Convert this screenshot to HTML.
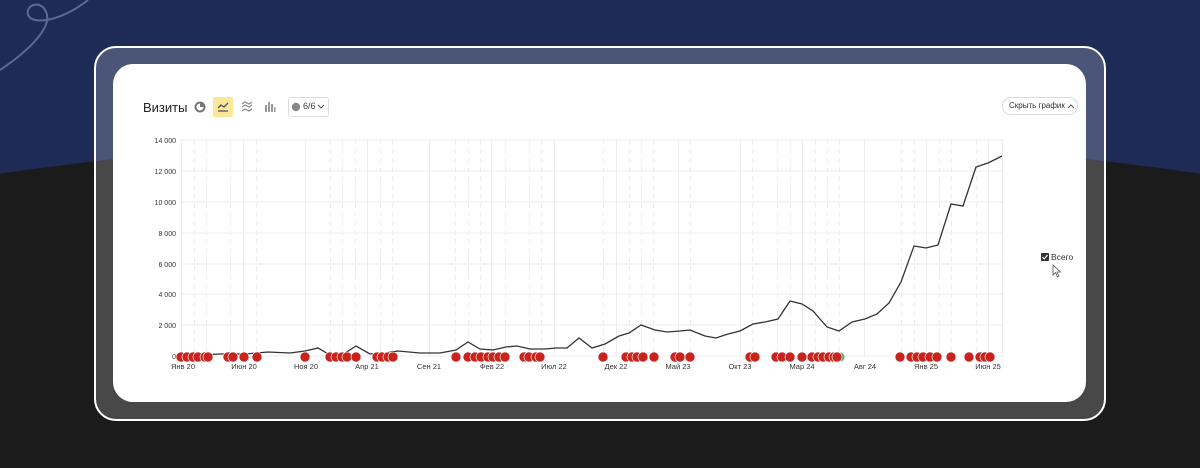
<!DOCTYPE html>
<html><head><meta charset="utf-8"><style>
*{margin:0;padding:0;box-sizing:border-box}
html,body{width:1200px;height:468px;overflow:hidden}
body{background:#1f2b57;font-family:"Liberation Sans","DejaVu Sans",sans-serif;position:relative}
.wrap{position:absolute;left:0;top:0;width:1200px;height:468px;overflow:hidden}
.dark{position:absolute;left:-900px;top:132px;width:3000px;height:1000px;border-radius:50%;background:#1b1b1b}
.frame{position:absolute;left:94px;top:46px;width:1012px;height:375px;border:2px solid #fff;border-radius:22px;background:rgba(255,255,255,0.2)}
.card{position:absolute;left:113px;top:64px;width:973px;height:338px;background:#fff;border-radius:20px}
.t{position:absolute;font-size:12.5px;color:#222;white-space:nowrap}
.btn{position:absolute;border:1px solid #ddd;border-radius:3px;background:#fff}
</style></head><body>
<div class="wrap">
<div class="dark"></div>
<svg style="position:absolute;left:0;top:0" width="120" height="80"><path d="M0,70 C30,50 55,25 45,10 C40,0 25,5 28,15 C32,25 60,22 88,0" fill="none" stroke="#5a6a90" stroke-width="2"/></svg>
<div class="frame"></div>
<div class="card"></div>
<div class="t" style="left:143px;top:100px;font-size:13px">Визиты</div>
<svg style="position:absolute;left:194px;top:101px" width="12" height="12"><circle cx="6" cy="6" r="4.5" fill="none" stroke="#777" stroke-width="2"/><path d="M6 6V1.5A4.5 4.5 0 0 1 10.5 6Z" fill="#777"/></svg>
<div style="position:absolute;left:213px;top:97px;width:20px;height:20px;background:#fbe79a;border-radius:2px"></div>
<svg style="position:absolute;left:217px;top:101px" width="12" height="12"><path d="M1 7L4 4L7 6L11 2" fill="none" stroke="#555" stroke-width="1.3"/><path d="M1 10H11" stroke="#555" stroke-width="1.3"/></svg>
<svg style="position:absolute;left:241px;top:101px" width="12" height="12"><path d="M1 3L4 1L8 3L11 1M1 6L4 4L8 6L11 4M1 10L4 8L8 10L11 8" fill="none" stroke="#888" stroke-width="1.2"/></svg>
<svg style="position:absolute;left:264px;top:101px" width="12" height="12"><rect x="1" y="4" width="2" height="7" fill="#999"/><rect x="4" y="1" width="2" height="10" fill="#999"/><rect x="7" y="3" width="2" height="8" fill="#999"/><rect x="10" y="6" width="1.5" height="5" fill="#999"/></svg>
<div class="btn" style="left:288px;top:97px;width:41px;height:20px"></div>
<svg style="position:absolute;left:291px;top:102px" width="10" height="10"><circle cx="5" cy="5" r="4.2" fill="#888"/></svg>
<div class="t" style="left:303px;top:101px;font-size:9px;color:#444">6/6</div>
<svg style="position:absolute;left:317px;top:104px" width="8" height="6"><path d="M1 1L4 4L7 1" fill="none" stroke="#555" stroke-width="1.1"/></svg>
<div class="btn" style="left:1002px;top:97px;width:76px;height:18px;border-radius:9px"></div>
<div class="t" style="left:1009px;top:101px;font-size:8px;color:#333">Скрыть график</div>
<svg style="position:absolute;left:1067px;top:103px" width="8" height="6"><path d="M1 5L4 2L7 5" fill="none" stroke="#555" stroke-width="1"/></svg>
<div style="position:absolute;left:1041px;top:253px;width:8px;height:8px;background:#333;border-radius:1px"></div>
<svg style="position:absolute;left:1041px;top:253px" width="8" height="8"><path d="M1.5 4L3.3 6L6.5 2" fill="none" stroke="#fff" stroke-width="1.2"/></svg>
<div class="t" style="left:1051px;top:252px;font-size:8.5px;color:#333">Всего</div>
<svg style="position:absolute;left:1052px;top:264px" width="10" height="14"><path d="M1 1V11L3.5 8.5L5.5 13L7 12.3L5 8H8.5Z" fill="#fff" stroke="#555" stroke-width="0.8"/></svg>
<svg style="position:absolute;left:0;top:0" width="1200" height="468">
<g stroke="#ececec" stroke-width="1">
<line x1="181" y1="140" x2="1002" y2="140"/><line x1="181" y1="171" x2="1002" y2="171"/><line x1="181" y1="202" x2="1002" y2="202"/><line x1="181" y1="233" x2="1002" y2="233"/><line x1="181" y1="264" x2="1002" y2="264"/><line x1="181" y1="294" x2="1002" y2="294"/><line x1="181" y1="325" x2="1002" y2="325"/><line x1="181" y1="356" x2="1002" y2="356"/>
<line x1="181.5" y1="140" x2="181.5" y2="356"/><line x1="243.5" y1="140" x2="243.5" y2="356"/><line x1="305.5" y1="140" x2="305.5" y2="356"/><line x1="367.5" y1="140" x2="367.5" y2="356"/><line x1="429.5" y1="140" x2="429.5" y2="356"/><line x1="491.5" y1="140" x2="491.5" y2="356"/><line x1="554.5" y1="140" x2="554.5" y2="356"/><line x1="616.5" y1="140" x2="616.5" y2="356"/><line x1="678.5" y1="140" x2="678.5" y2="356"/><line x1="740.5" y1="140" x2="740.5" y2="356"/><line x1="802.5" y1="140" x2="802.5" y2="356"/><line x1="864.5" y1="140" x2="864.5" y2="356"/><line x1="926.5" y1="140" x2="926.5" y2="356"/><line x1="988.5" y1="140" x2="988.5" y2="356"/><line x1="1002.5" y1="140" x2="1002.5" y2="356"/>
</g>
<g stroke="#ececec" stroke-dasharray="5,4">
<line x1="194.5" y1="140" x2="194.5" y2="356"/><line x1="206.5" y1="140" x2="206.5" y2="356"/><line x1="230.5" y1="140" x2="230.5" y2="356"/><line x1="256.5" y1="140" x2="256.5" y2="356"/><line x1="330.5" y1="140" x2="330.5" y2="356"/><line x1="342.5" y1="140" x2="342.5" y2="356"/><line x1="355.5" y1="140" x2="355.5" y2="356"/><line x1="380.5" y1="140" x2="380.5" y2="356"/><line x1="392.5" y1="140" x2="392.5" y2="356"/><line x1="455.5" y1="140" x2="455.5" y2="356"/><line x1="468.5" y1="140" x2="468.5" y2="356"/><line x1="480.5" y1="140" x2="480.5" y2="356"/><line x1="505.5" y1="140" x2="505.5" y2="356"/><line x1="529.5" y1="140" x2="529.5" y2="356"/><line x1="541.5" y1="140" x2="541.5" y2="356"/><line x1="603.5" y1="140" x2="603.5" y2="356"/><line x1="629.5" y1="140" x2="629.5" y2="356"/><line x1="641.5" y1="140" x2="641.5" y2="356"/><line x1="653.5" y1="140" x2="653.5" y2="356"/><line x1="690.5" y1="140" x2="690.5" y2="356"/><line x1="752.5" y1="140" x2="752.5" y2="356"/><line x1="777.5" y1="140" x2="777.5" y2="356"/><line x1="790.5" y1="140" x2="790.5" y2="356"/><line x1="815.5" y1="140" x2="815.5" y2="356"/><line x1="827.5" y1="140" x2="827.5" y2="356"/><line x1="839.5" y1="140" x2="839.5" y2="356"/><line x1="901.5" y1="140" x2="901.5" y2="356"/><line x1="914.5" y1="140" x2="914.5" y2="356"/><line x1="939.5" y1="140" x2="939.5" y2="356"/><line x1="951.5" y1="140" x2="951.5" y2="356"/><line x1="976.5" y1="140" x2="976.5" y2="356"/>
</g>
<g font-size="7" fill="#333" text-anchor="end">
<text x="176" y="143">14 000</text><text x="176" y="174">12 000</text><text x="176" y="205">10 000</text><text x="176" y="236">8 000</text><text x="176" y="267">6 000</text><text x="176" y="297">4 000</text><text x="176" y="328">2 000</text><text x="176" y="359">0</text>
</g>
<g font-size="7.5" fill="#333" text-anchor="middle">
<text x="183" y="369">Янв 20</text><text x="244" y="369">Июн 20</text><text x="306" y="369">Ноя 20</text><text x="367" y="369">Апр 21</text><text x="429" y="369">Сен 21</text><text x="492" y="369">Фев 22</text><text x="554" y="369">Июл 22</text><text x="616" y="369">Дек 22</text><text x="678" y="369">Май 23</text><text x="740" y="369">Окт 23</text><text x="802" y="369">Мар 24</text><text x="865" y="369">Авг 24</text><text x="926" y="369">Янв 25</text><text x="988" y="369">Июн 25</text>
</g>
<polyline fill="none" stroke="#333" stroke-width="1.3" points="181,355 200,355 220,354 245,354 268,352 290,353 305,351 318,348 330,355 342,355 356,346 370,354 385,353 398,351 420,353 440,353 456,350 468,342 480,349 493,350 506,347 517,346 530,349 545,349 556,348 567,348 579,338 592,348 605,344 619,336 629,333 641,325 655,330 667,332 680,331 690,330 705,336 716,338 728,334 740,331 753,324 765,322 778,319 790,301 802,304 813,311 827,327 839,331 852,322 865,319 877,314 889,303 901,282 914,246 926,248 938,245 951,204 963,206 976,167 988,163 1002,156"/>
<g fill="#c8241d" stroke="#fff" stroke-width="0.6">
<circle cx="181" cy="357" r="5"/><circle cx="187" cy="357" r="5"/><circle cx="193" cy="357" r="5"/><circle cx="198" cy="357" r="5"/><circle cx="205" cy="357" r="5"/><circle cx="208" cy="357" r="5"/><circle cx="228" cy="357" r="5"/><circle cx="233" cy="357" r="5"/><circle cx="244" cy="357" r="5"/><circle cx="257" cy="357" r="5"/><circle cx="305" cy="357" r="5"/><circle cx="330" cy="357" r="5"/><circle cx="336" cy="357" r="5"/><circle cx="342" cy="357" r="5"/><circle cx="347" cy="357" r="5"/><circle cx="356" cy="357" r="5"/><circle cx="377" cy="357" r="5"/><circle cx="382" cy="357" r="5"/><circle cx="388" cy="357" r="5"/><circle cx="393" cy="357" r="5"/><circle cx="456" cy="357" r="5"/><circle cx="468" cy="357" r="5"/><circle cx="475" cy="357" r="5"/><circle cx="481" cy="357" r="5"/><circle cx="488" cy="357" r="5"/><circle cx="493" cy="357" r="5"/><circle cx="499" cy="357" r="5"/><circle cx="505" cy="357" r="5"/><circle cx="524" cy="357" r="5"/><circle cx="529" cy="357" r="5"/><circle cx="536" cy="357" r="5"/><circle cx="540" cy="357" r="5"/><circle cx="603" cy="357" r="5"/><circle cx="626" cy="357" r="5"/><circle cx="632" cy="357" r="5"/><circle cx="637" cy="357" r="5"/><circle cx="643" cy="357" r="5"/><circle cx="654" cy="357" r="5"/><circle cx="675" cy="357" r="5"/><circle cx="680" cy="357" r="5"/><circle cx="690" cy="357" r="5"/><circle cx="750" cy="357" r="5"/><circle cx="755" cy="357" r="5"/><circle cx="776" cy="357" r="5"/><circle cx="782" cy="357" r="5"/><circle cx="790" cy="357" r="5"/><circle cx="802" cy="357" r="5"/><circle cx="812" cy="357" r="5"/><circle cx="818" cy="357" r="5"/><circle cx="823" cy="357" r="5"/><circle cx="829" cy="357" r="5"/><circle cx="834" cy="357" r="5"/><circle cx="900" cy="357" r="5"/><circle cx="911" cy="357" r="5"/><circle cx="917" cy="357" r="5"/><circle cx="923" cy="357" r="5"/><circle cx="930" cy="357" r="5"/><circle cx="937" cy="357" r="5"/><circle cx="951" cy="357" r="5"/><circle cx="969" cy="357" r="5"/><circle cx="980" cy="357" r="5"/><circle cx="985" cy="357" r="5"/><circle cx="990" cy="357" r="5"/>
</g>
<circle cx="840" cy="357" r="4.5" fill="#5aa873"/>
<circle cx="837" cy="357" r="5" fill="#c8241d" stroke="#fff" stroke-width="0.6"/>
</svg>
</div>
</body></html>
